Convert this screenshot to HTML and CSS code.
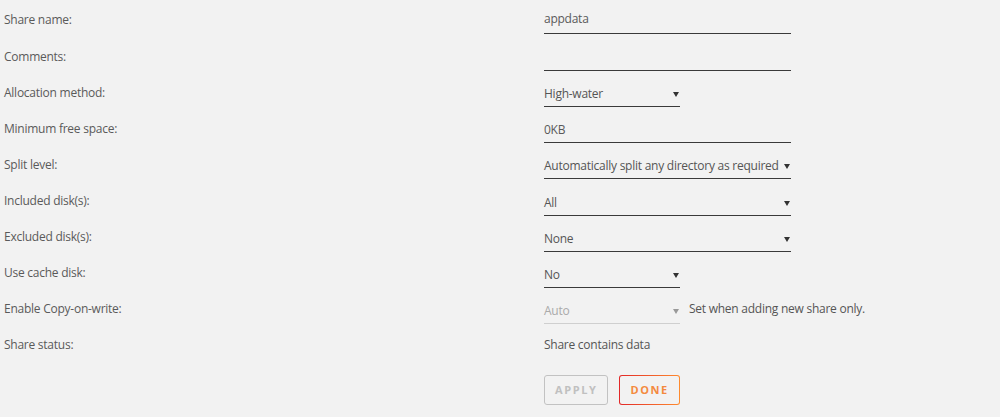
FILE: index.html
```html
<!DOCTYPE html>
<html lang="en">
<head>
    <meta charset="UTF-8">
    <title>Share settings</title>
    <link rel="stylesheet" href="styles.css">
</head>
<body>
    <form class="share-form">
        <div class="row first">
            <label>Share name:</label>
            <div class="field wide"><input type="text" value="appdata"></div>
        </div>
        <div class="row">
            <label>Comments:</label>
            <div class="field wide"><input type="text" value=""></div>
        </div>
        <div class="row">
            <label>Allocation method:</label>
            <div class="field select short"><span>High-water</span></div>
        </div>
        <div class="row">
            <label>Minimum free space:</label>
            <div class="field wide"><input type="text" value="0KB"></div>
        </div>
        <div class="row">
            <label>Split level:</label>
            <div class="field select wide"><span>Automatically split any directory as required</span></div>
        </div>
        <div class="row">
            <label>Included disk(s):</label>
            <div class="field select wide"><span>All</span></div>
        </div>
        <div class="row">
            <label>Excluded disk(s):</label>
            <div class="field select wide"><span>None</span></div>
        </div>
        <div class="row">
            <label>Use cache disk:</label>
            <div class="field select short"><span>No</span></div>
        </div>
        <div class="row">
            <label>Enable Copy-on-write:</label>
            <div class="inline">
                <div class="field select short disabled"><span>Auto</span></div>
                <span class="note">Set when adding new share only.</span>
            </div>
        </div>
        <div class="row">
            <label>Share status:</label>
            <span class="status">Share contains data</span>
        </div>
        <div class="row actions">
            <span></span>
            <div class="buttons">
                <button type="button" class="btn" disabled>Apply</button>
                <button type="button" class="btn primary">Done</button>
            </div>
        </div>
    </form>
</body>
</html>
```

FILE: styles.css
```css
* {
    margin: 0;
    padding: 0;
    box-sizing: border-box;
}

body {
    font-family: 'Open Sans', 'Noto Sans', sans-serif;
    font-size: 12px;
    letter-spacing: -0.25px;
    color: #5a5a5a;
    background: #f2f2f2;
    padding: 2px 4px 0;
}

.row {
    display: grid;
    grid-template-columns: 540px auto;
    align-items: center;
    height: 36.1px;
}

.row label {
    color: #5a5a5a;
}

.field {
    height: 26px;
    margin-top: 4px;
    border-bottom: 1px solid #3a3a3a;
    display: flex;
    align-items: center;
    position: relative;
}

.first .field {
    margin-top: 2px;
}

.first .field input {
    padding-bottom: 5px;
}

.first label {
    margin-top: -2px;
}

.wide {
    width: 247px;
}

.short {
    width: 136px;
}

.field input {
    border: none;
    background: transparent;
    font: inherit;
    letter-spacing: inherit;
    color: #5a5a5a;
    width: 100%;
    height: 100%;
    outline: none;
}

.select span {
    color: #555;
}

.select::after {
    content: "";
    position: absolute;
    right: 1px;
    top: 11px;
    border-left: 3px solid transparent;
    border-right: 3px solid transparent;
    border-top: 5px solid #333;
}

.select.disabled {
    border-bottom-color: #cfcfcf;
}

.select.disabled span {
    color: #aaa;
}

.select.disabled::after {
    border-top-color: #999;
}

.inline {
    display: flex;
    align-items: center;
    gap: 9px;
}

.inline .field {
    margin-top: 4px;
}

.note,
.status {
    color: #555;
}

.actions {
    height: 42px;
    align-items: end;
}

.buttons {
    display: flex;
    gap: 11px;
}

.btn {
    height: 30px;
    padding: 0 10px;
    font-family: inherit;
    font-size: 11px;
    font-weight: 700;
    letter-spacing: 1.6px;
    text-transform: uppercase;
    border-radius: 3px;
    background: transparent;
    border: 1px solid #c2c2c2;
    color: #c0c0c0;
}

.btn.primary {
    border: 1px solid transparent;
    background: linear-gradient(#f2f2f2, #f2f2f2) padding-box,
                linear-gradient(90deg, #e22828, #ff8c2f) border-box;
    color: #f48a3e;
    cursor: pointer;
}
```
